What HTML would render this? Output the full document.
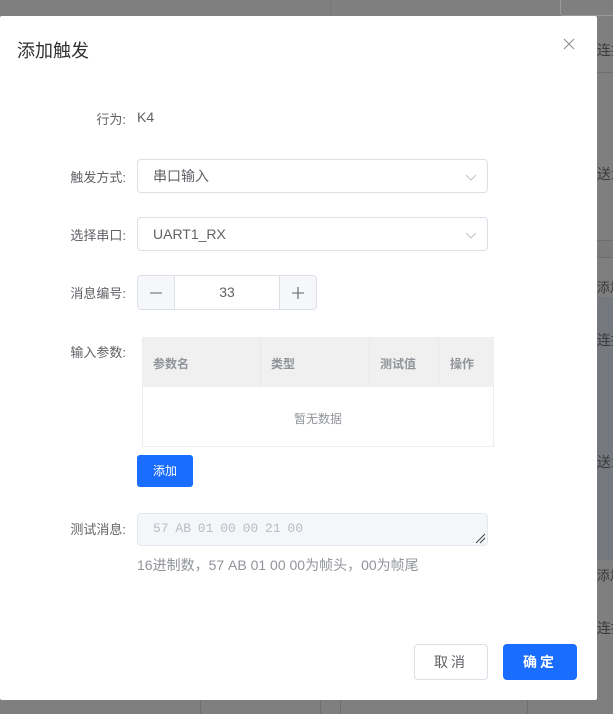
<!DOCTYPE html>
<html><head><meta charset="utf-8"><style>
*{box-sizing:border-box;margin:0;padding:0}
body{width:613px;height:714px;overflow:hidden;background:#7f7f7f;font-family:"Liberation Sans","Noto Sans CJK SC",sans-serif;position:relative;color:#606266}
.a{position:absolute}
.bg{color:#3a3a3a;font-size:14px;white-space:nowrap}
.modal{position:absolute;left:0;top:16px;width:597px;height:684px;background:#fff;border-radius:2px}
.lbl{position:absolute;right:487px;font-size:13px;color:#606266;text-align:right;white-space:nowrap}
.sel{position:absolute;left:137px;width:351px;height:34px;border:1px solid #dcdfe6;border-radius:4px;font-size:14px;color:#606266;padding-left:15px;line-height:32px}
.sel svg{position:absolute;right:10px;top:11px}
</style></head><body>
<div class="a" style="left:560px;top:-10px;width:60px;height:26px;border:1px solid #999;border-radius:3px"></div>
<div class="a" style="left:330px;top:0;width:1px;height:16px;background:#777"></div>
<div class="a bg" style="left:597px;top:40px">连接</div>
<div class="a" style="left:597px;top:72px;width:16px;height:1px;background:#6e6e6e"></div>
<div class="a bg" style="left:597px;top:164px">送1</div>
<div class="a" style="left:597px;top:240px;width:16px;height:18px;background:#7a7a7a;border-top:1px solid #6e6e6e;border-bottom:1px solid #6e6e6e"></div>
<div class="a bg" style="left:597px;top:277px;font-size:13px">添加</div>
<div class="a" style="left:597px;top:297px;width:16px;height:263px;background:#767880"></div>
<div class="a bg" style="left:597px;top:330px">连接</div>
<div class="a bg" style="left:597px;top:452px">送1</div>
<div class="a bg" style="left:597px;top:565px;font-size:13px">添加</div>
<div class="a bg" style="left:597px;top:618px">连接</div>
<div class="a" style="left:200px;top:700px;width:1px;height:14px;background:#6e6e6e"></div>
<div class="a" style="left:320px;top:700px;width:1px;height:14px;background:#6e6e6e"></div>
<div class="a" style="left:340px;top:700px;width:1px;height:14px;background:#6e6e6e"></div>
<div class="a" style="left:527px;top:700px;width:1px;height:14px;background:#6e6e6e"></div>

<div class="modal"></div>
<div class="a" style="left:17px;top:37px;font-size:18px;color:#303133">添加触发</div>
<svg class="a" style="left:563px;top:38px" width="12" height="12" viewBox="0 0 12 12"><path d="M1 1L11 11M11 1L1 11" stroke="#909399" stroke-width="1.2"/></svg>

<div class="lbl" style="top:109px">行为:</div>
<div class="a" style="left:137px;top:109px;font-size:14px;color:#606266">K4</div>

<div class="lbl" style="top:167px">触发方式:</div>
<div class="sel" style="top:159px">串口输入<svg width="12" height="12" viewBox="0 0 12 12"><path d="M1 4L6 9L11 4" fill="none" stroke="#c0c4cc" stroke-width="1.1"/></svg></div>

<div class="lbl" style="top:225px">选择串口:</div>
<div class="sel" style="top:217px">UART1_RX<svg width="12" height="12" viewBox="0 0 12 12"><path d="M1 4L6 9L11 4" fill="none" stroke="#c0c4cc" stroke-width="1.1"/></svg></div>

<div class="lbl" style="top:283px">消息编号:</div>
<div class="a" style="left:137px;top:275px;width:180px;height:35px;border:1px solid #dcdfe6;border-radius:4px;overflow:hidden">
<div class="a" style="left:0;top:0;width:37px;height:33px;background:#f5f7fa;border-right:1px solid #dcdfe6"></div>
<svg class="a" style="left:12px;top:11px" width="12" height="12"><path d="M0 6H12" stroke="#606266" stroke-width="1.1"/></svg>
<div class="a" style="left:141px;top:0;width:37px;height:33px;background:#f5f7fa;border-left:1px solid #dcdfe6"></div>
<svg class="a" style="left:154px;top:11px" width="12" height="12"><path d="M0 6H12M6 0V12" stroke="#606266" stroke-width="1.1"/></svg>
<div class="a" style="left:37px;width:104px;top:0;line-height:33px;text-align:center;font-size:14px;color:#606266">33</div>
</div>

<div class="lbl" style="top:342px">输入参数:</div>
<div class="a" style="left:142px;top:337px;width:352px;height:110px;border:1px solid #ebeef5">
<div class="a" style="left:0;top:0;width:350px;height:49px;background:#f0f0f0"></div>
<div class="a" style="left:117px;top:0;width:1px;height:49px;background:#e8e8e8"></div>
<div class="a" style="left:226px;top:0;width:1px;height:49px;background:#e8e8e8"></div>
<div class="a" style="left:295px;top:0;width:1px;height:49px;background:#e8e8e8"></div>
<div class="a" style="left:10px;top:17px;font-size:12px;color:#909399;font-weight:bold">参数名</div>
<div class="a" style="left:128px;top:17px;font-size:12px;color:#909399;font-weight:bold">类型</div>
<div class="a" style="left:237px;top:17px;font-size:12px;color:#909399;font-weight:bold">测试值</div>
<div class="a" style="left:307px;top:17px;font-size:12px;color:#909399;font-weight:bold">操作</div>
<div class="a" style="left:0;width:350px;top:72px;text-align:center;font-size:12px;color:#909399">暂无数据</div>
</div>

<div class="a" style="left:137px;top:455px;width:56px;height:32px;background:#1a6dff;border-radius:3px;color:#fff;font-size:12px;text-align:center;line-height:32px">添加</div>

<div class="lbl" style="top:519px">测试消息:</div>
<div class="a" style="left:137px;top:513px;width:351px;height:33px;background:#f5f6f9;border:1px solid #e4e7ed;border-radius:4px;font-family:'Liberation Mono',monospace;font-size:13px;color:#b8bcc4;padding:7px 15px;word-spacing:-1px;white-space:nowrap">57 AB 01 00 00 21 00</div>
<svg class="a" style="left:474px;top:532px" width="12" height="12"><path d="M2 11L11 2M6 11L11 6" stroke="#444" stroke-width="1"/></svg>
<div class="a" style="left:137px;top:555px;font-size:14px;color:#909399;white-space:nowrap">16进制数，57 AB 01 00 00为帧头，00为帧尾</div>

<div class="a" style="left:414px;top:644px;width:74px;height:36px;border:1px solid #dcdfe6;border-radius:4px;text-align:center;line-height:34px;font-size:14px;color:#606266;letter-spacing:3px">取消</div>
<div class="a" style="left:503px;top:644px;width:74px;height:36px;background:#1a6dff;border-radius:4px;text-align:center;line-height:36px;font-size:14px;color:#fff;letter-spacing:3px;font-weight:bold">确定</div>
</body></html>
